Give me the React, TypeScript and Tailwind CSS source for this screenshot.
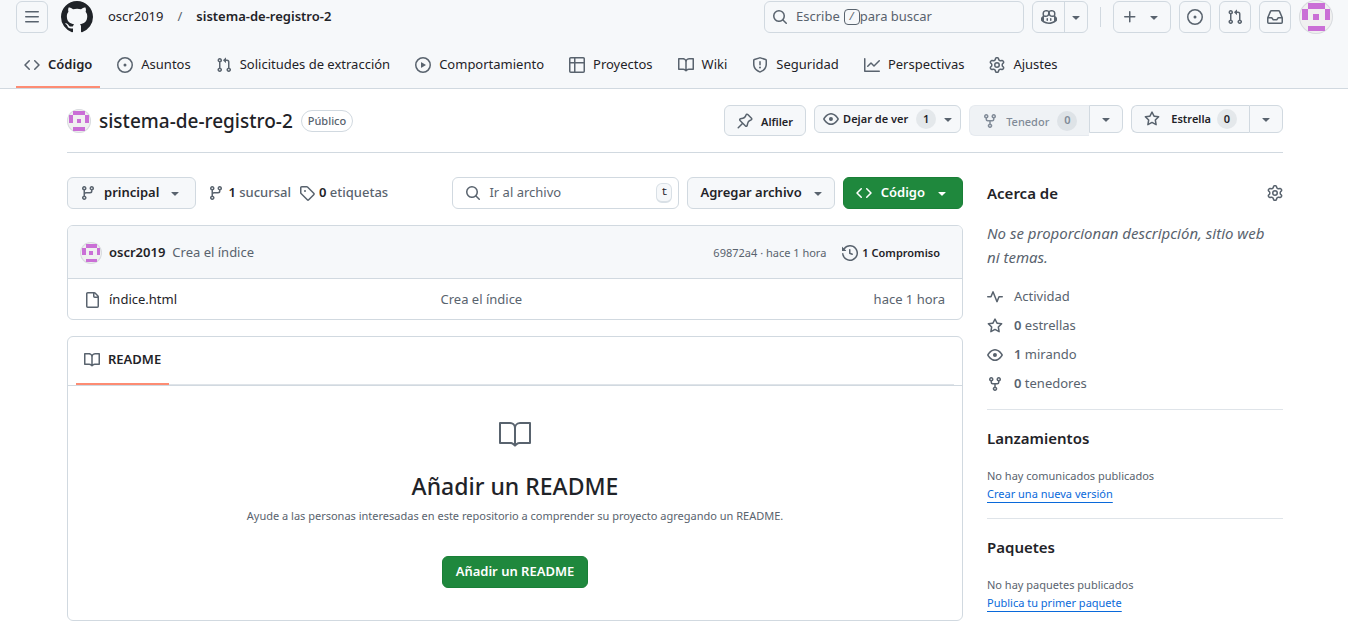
import React from 'react';

const icons = {
  bars: 'M1 2.75A.75.75 0 0 1 1.75 2h12.5a.75.75 0 0 1 0 1.5H1.75A.75.75 0 0 1 1 2.75Zm0 5A.75.75 0 0 1 1.75 7h12.5a.75.75 0 0 1 0 1.5H1.75A.75.75 0 0 1 1 7.75ZM1.75 12h12.5a.75.75 0 0 1 0 1.5H1.75a.75.75 0 0 1 0-1.5Z',
  github: 'M8 0c4.42 0 8 3.58 8 8a8.013 8.013 0 0 1-5.45 7.59c-.4.08-.55-.17-.55-.38 0-.27.01-1.13.01-2.2 0-.75-.25-1.23-.54-1.48 1.78-.2 3.65-.88 3.65-3.95 0-.88-.31-1.59-.82-2.15.08-.2.36-1.02-.08-2.12 0 0-.67-.22-2.2.82-.64-.18-1.32-.27-2-.27-.68 0-1.36.09-2 .27-1.53-1.03-2.2-.82-2.2-.82-.44 1.1-.16 1.92-.08 2.12-.51.56-.82 1.28-.82 2.15 0 3.06 1.86 3.75 3.64 3.95-.23.2-.44.55-.51 1.07-.46.21-1.61.55-2.33-.66-.15-.24-.6-.83-1.23-.82-.67.01-.27.38.01.53.34.19.73.9.82 1.13.16.45.68 1.31 2.69.94 0 .67.01 1.3.01 1.49 0 .21-.15.45-.55.38A7.995 7.995 0 0 1 0 8c0-4.42 3.58-8 8-8Z',
  code: 'm11.28 3.22 4.25 4.25a.75.75 0 0 1 0 1.06l-4.25 4.25a.749.749 0 0 1-1.275-.326.749.749 0 0 1 .215-.734L13.94 8l-3.72-3.72a.749.749 0 0 1 .326-1.275.749.749 0 0 1 .734.215Zm-6.56 0a.751.751 0 0 1 1.042.018.751.751 0 0 1 .018 1.042L2.06 8l3.72 3.72a.749.749 0 0 1-.326 1.275.749.749 0 0 1-.734-.215L.47 8.53a.75.75 0 0 1 0-1.06Z',
  issue: 'M8 9.5a1.5 1.5 0 1 0 0-3 1.5 1.5 0 0 0 0 3ZM8 0a8 8 0 1 1 0 16A8 8 0 0 1 8 0ZM1.5 8a6.5 6.5 0 1 0 13 0 6.5 6.5 0 0 0-13 0Z',
  pull: 'M1.5 3.25a2.25 2.25 0 1 1 3 2.122v5.256a2.251 2.251 0 1 1-1.5 0V5.372A2.25 2.25 0 0 1 1.5 3.25Zm5.677-.177L9.573.677A.25.25 0 0 1 10 .854V2.5h1A2.5 2.5 0 0 1 13.5 5v5.628a2.251 2.251 0 1 1-1.5 0V5a1 1 0 0 0-1-1h-1v1.646a.25.25 0 0 1-.427.177L7.177 3.427a.25.25 0 0 1 0-.354ZM3.75 2.5a.75.75 0 1 0 0 1.5.75.75 0 0 0 0-1.5Zm0 9.5a.75.75 0 1 0 0 1.5.75.75 0 0 0 0-1.5Zm8.25.75a.75.75 0 1 0 1.5 0 .75.75 0 0 0-1.5 0Z',
  play: 'M8 0a8 8 0 1 1 0 16A8 8 0 0 1 8 0ZM1.5 8a6.5 6.5 0 1 0 13 0 6.5 6.5 0 0 0-13 0Zm4.879-2.773 4.264 2.559a.25.25 0 0 1 0 .428l-4.264 2.559A.25.25 0 0 1 6 10.559V5.442a.25.25 0 0 1 .379-.215Z',
  table: 'M0 1.75C0 .784.784 0 1.75 0h12.5C15.216 0 16 .784 16 1.75v12.5A1.75 1.75 0 0 1 14.25 16H1.75A1.75 1.75 0 0 1 0 14.25ZM6.5 6.5v8h7.75a.25.25 0 0 0 .25-.25V6.5Zm8-1.5V1.75a.25.25 0 0 0-.25-.25H6.5V5Zm-13 1.5v7.75c0 .138.112.25.25.25H5v-8ZM5 5V1.5H1.75a.25.25 0 0 0-.25.25V5Z',
  book: 'M0 1.75A.75.75 0 0 1 .75 1h4.253c1.227 0 2.317.59 3 1.501A3.743 3.743 0 0 1 11.006 1h4.245a.75.75 0 0 1 .75.75v10.5a.75.75 0 0 1-.75.75h-4.507a2.25 2.25 0 0 0-1.591.659l-.622.621a.75.75 0 0 1-1.06 0l-.622-.621A2.25 2.25 0 0 0 5.258 13H.75a.75.75 0 0 1-.75-.75Zm7.251 10.324.004-5.073-.002-2.253A2.25 2.25 0 0 0 5.003 2.5H1.5v9h3.757a3.75 3.75 0 0 1 1.994.574ZM8.755 4.75l-.004 7.322a3.752 3.752 0 0 1 1.992-.572H14.5v-9h-3.495a2.25 2.25 0 0 0-2.25 2.25Z',
  shield: 'M7.467.133a1.748 1.748 0 0 1 1.066 0l5.25 1.68A1.75 1.75 0 0 1 15 3.48V7c0 1.566-.32 3.182-1.303 4.682-.983 1.498-2.585 2.813-5.032 3.855a1.697 1.697 0 0 1-1.33 0c-2.447-1.042-4.049-2.357-5.032-3.855C1.32 10.182 1 8.566 1 7V3.48a1.75 1.75 0 0 1 1.217-1.667Zm.61 1.429a.25.25 0 0 0-.153 0l-5.25 1.68a.25.25 0 0 0-.174.238V7c0 1.358.275 2.666 1.057 3.86.784 1.194 2.121 2.34 4.366 3.297a.196.196 0 0 0 .154 0c2.245-.956 3.582-2.104 4.366-3.298C13.225 9.666 13.5 8.36 13.5 7V3.48a.251.251 0 0 0-.174-.237l-5.25-1.68ZM8.75 4.75v3a.75.75 0 0 1-1.5 0v-3a.75.75 0 0 1 1.5 0ZM9 10.5a1 1 0 1 1-2 0 1 1 0 0 1 2 0Z',
  graph: 'M1.5 1.75V13.5h13.75a.75.75 0 0 1 0 1.5H.75a.75.75 0 0 1-.75-.75V1.75a.75.75 0 0 1 1.5 0Zm14.28 2.53-5.25 5.25a.75.75 0 0 1-1.06 0L7 7.06 4.28 9.78a.751.751 0 0 1-1.042-.018.751.751 0 0 1-.018-1.042l3.25-3.25a.75.75 0 0 1 1.06 0L10 7.94l4.72-4.72a.751.751 0 0 1 1.042.018.751.751 0 0 1 .018 1.042Z',
  gear: 'M8 0a8.2 8.2 0 0 1 .701.031C9.444.095 9.99.645 10.16 1.29l.288 1.107c.018.066.079.158.212.224.231.114.454.243.668.386.123.082.233.09.299.071l1.103-.303c.644-.176 1.392.021 1.82.63.27.385.506.792.704 1.218.315.675.111 1.422-.364 1.891l-.814.806c-.049.048-.098.147-.088.294.016.257.016.515 0 .772-.01.147.038.246.088.294l.814.806c.475.469.679 1.216.364 1.891a7.977 7.977 0 0 1-.704 1.217c-.428.61-1.176.807-1.82.63l-1.102-.302c-.067-.019-.177-.011-.3.071a5.909 5.909 0 0 1-.668.386c-.133.066-.194.158-.211.224l-.29 1.106c-.168.646-.715 1.196-1.458 1.26a8.006 8.006 0 0 1-1.402 0c-.743-.064-1.289-.614-1.458-1.26l-.289-1.106c-.018-.066-.079-.158-.212-.224a5.738 5.738 0 0 1-.668-.386c-.123-.082-.233-.09-.299-.071l-1.103.303c-.644.176-1.392-.021-1.82-.63a8.12 8.12 0 0 1-.704-1.218c-.315-.675-.111-1.422.363-1.891l.815-.806c.05-.048.098-.147.088-.294a6.214 6.214 0 0 1 0-.772c.01-.147-.038-.246-.088-.294l-.815-.806C.635 6.045.431 5.298.746 4.623a7.92 7.92 0 0 1 .704-1.217c.428-.61 1.176-.807 1.82-.63l1.102.302c.067.019.177.011.3-.071.214-.143.437-.272.668-.386.133-.066.194-.158.211-.224l.29-1.106C6.009.645 6.556.095 7.299.03 7.53.01 7.764 0 8 0Zm-.571 1.525c-.036.003-.108.036-.137.146l-.289 1.105c-.147.561-.549.967-.998 1.189-.173.086-.34.183-.5.29-.417.278-.97.423-1.529.27l-1.103-.303c-.109-.03-.175.016-.195.045-.22.312-.412.644-.573.99-.014.031-.021.11.059.19l.815.806c.411.406.562.957.53 1.456a4.709 4.709 0 0 0 0 .582c.032.499-.119 1.05-.53 1.456l-.815.806c-.081.08-.073.159-.059.19.162.346.353.677.573.989.02.03.085.076.195.046l1.102-.303c.56-.153 1.113-.008 1.53.27.161.107.328.204.501.29.447.222.85.629.997 1.189l.289 1.105c.029.109.101.143.137.146a6.6 6.6 0 0 0 1.142 0c.036-.003.108-.036.137-.146l.289-1.105c.147-.561.549-.967.998-1.189.173-.086.34-.183.5-.29.417-.278.97-.423 1.529-.27l1.103.303c.109.029.175-.016.195-.045.22-.313.411-.644.573-.99.014-.031.021-.11-.059-.19l-.815-.806c-.411-.406-.562-.957-.53-1.456a4.709 4.709 0 0 0 0-.582c-.032-.499.119-1.05.53-1.456l.815-.806c.081-.08.073-.159.059-.19a6.464 6.464 0 0 0-.573-.989c-.02-.03-.085-.076-.195-.046l-1.102.303c-.56.153-1.113.008-1.53-.27a4.44 4.44 0 0 0-.501-.29c-.447-.222-.85-.629-.997-1.189l-.289-1.105c-.029-.11-.101-.143-.137-.146a6.6 6.6 0 0 0-1.142 0ZM11 8a3 3 0 1 1-6 0 3 3 0 0 1 6 0ZM9.5 8a1.5 1.5 0 1 0-3.001.001A1.5 1.5 0 0 0 9.5 8Z',
  search: 'M10.68 11.74a6 6 0 0 1-7.922-8.982 6 6 0 0 1 8.982 7.922l3.04 3.04a.749.749 0 0 1-.326 1.275.749.749 0 0 1-.734-.215ZM11.5 7a4.499 4.499 0 1 0-8.997 0A4.499 4.499 0 0 0 11.5 7Z',
  caret: 'm4.427 7.427 3.396 3.396a.25.25 0 0 0 .354 0l3.396-3.396A.25.25 0 0 0 11.396 7H4.604a.25.25 0 0 0-.177.427Z',
  copilot: 'M7.998 15.035c-4.562 0-7.873-2.914-7.998-3.749V9.338c.085-.628.677-1.686 1.588-2.065.013-.07.024-.143.036-.218.029-.183.06-.384.126-.612-.201-.508-.254-1.084-.254-1.656 0-.87.128-1.769.693-2.484.579-.733 1.494-1.124 2.724-1.261 1.206-.134 2.262.034 2.944.765.05.053.096.108.139.165.044-.057.094-.112.143-.165.682-.731 1.738-.899 2.944-.765 1.23.137 2.145.528 2.724 1.261.566.715.693 1.614.693 2.484 0 .572-.053 1.148-.254 1.656.066.228.098.429.126.612.012.076.024.148.037.218.924.385 1.522 1.471 1.591 2.095v1.872c0 .766-3.351 3.795-8.002 3.795Zm0-1.485c2.28 0 4.584-1.11 5.002-1.433V7.862l-.023-.116c-.49.21-1.075.291-1.727.291-1.146 0-2.059-.327-2.71-.991A3.222 3.222 0 0 1 8 6.303a3.24 3.24 0 0 1-.544.743c-.65.664-1.563.991-2.71.991-.652 0-1.236-.081-1.727-.291l-.023.116v4.255c.419.323 2.722 1.433 5.002 1.433ZM6.762 2.83c-.193-.206-.637-.413-1.682-.297-1.019.113-1.479.404-1.713.7-.247.312-.369.789-.369 1.554 0 .793.129 1.171.308 1.371.162.181.519.379 1.442.379.853 0 1.339-.235 1.638-.54.315-.322.527-.827.617-1.553.117-.935-.037-1.395-.241-1.614Zm4.155-.297c-1.044-.116-1.488.091-1.681.297-.204.219-.359.679-.242 1.614.091.726.303 1.231.618 1.553.299.305.784.54 1.638.54.922 0 1.28-.198 1.442-.379.179-.2.308-.578.308-1.371 0-.765-.123-1.242-.37-1.554-.233-.296-.693-.587-1.713-.7ZM6.25 9.037a.75.75 0 0 1 .75.75v1.501a.75.75 0 0 1-1.5 0V9.787a.75.75 0 0 1 .75-.75Zm4.25.75v1.501a.75.75 0 0 1-1.5 0V9.787a.75.75 0 0 1 1.5 0Z',
  plus: 'M7.75 2a.75.75 0 0 1 .75.75V7h4.25a.75.75 0 0 1 0 1.5H8.5v4.25a.75.75 0 0 1-1.5 0V8.5H2.75a.75.75 0 0 1 0-1.5H7V2.75A.75.75 0 0 1 7.75 2Z',
  inbox: 'M2.8 2.06A1.75 1.75 0 0 1 4.41 1h7.18c.7 0 1.333.417 1.61 1.06l2.74 6.395c.04.093.06.194.06.295v4.5A1.75 1.75 0 0 1 14.25 15H1.75A1.75 1.75 0 0 1 0 13.25v-4.5c0-.101.02-.202.06-.295Zm1.61.44a.25.25 0 0 0-.23.152L1.887 8H4.75a.75.75 0 0 1 .6.3L6.625 10h2.75l1.275-1.7a.75.75 0 0 1 .6-.3h2.863L11.82 2.652a.25.25 0 0 0-.23-.152Zm10.09 7h-2.875l-1.275 1.7a.75.75 0 0 1-.6.3h-3.5a.75.75 0 0 1-.6-.3L4.375 9.5H1.5v3.75c0 .138.112.25.25.25h12.5a.25.25 0 0 0 .25-.25Z',
  pin: 'm11.294.984 3.722 3.722a1.75 1.75 0 0 1-.504 2.826l-1.327.613a3.089 3.089 0 0 0-1.707 2.084l-.584 2.454c-.317 1.332-1.972 1.8-2.94.832L5.75 11.311 1.78 15.28a.749.749 0 1 1-1.06-1.06l3.969-3.97-2.204-2.204c-.968-.968-.5-2.623.832-2.94l2.454-.584a3.08 3.08 0 0 0 2.084-1.707l.613-1.327a1.75 1.75 0 0 1 2.826-.504ZM6.283 9.723l2.732 2.731a.25.25 0 0 0 .42-.119l.584-2.454a4.586 4.586 0 0 1 2.537-3.098l1.328-.613a.25.25 0 0 0 .072-.404l-3.722-3.722a.25.25 0 0 0-.404.072l-.613 1.328a4.584 4.584 0 0 1-3.098 2.537l-2.454.584a.25.25 0 0 0-.119.42l2.731 2.732Z',
  eye: 'M8 2c1.981 0 3.671.992 4.933 2.078 1.27 1.091 2.187 2.345 2.637 3.023a1.62 1.62 0 0 1 0 1.798c-.45.678-1.367 1.932-2.637 3.023C11.67 13.008 9.981 14 8 14c-1.981 0-3.671-.992-4.933-2.078C1.797 10.83.88 9.576.43 8.898a1.62 1.62 0 0 1 0-1.798c.45-.677 1.367-1.931 2.637-3.022C4.33 2.992 6.019 2 8 2ZM1.679 7.932a.12.12 0 0 0 0 .136c.411.622 1.241 1.75 2.366 2.717C5.176 11.758 6.527 12.5 8 12.5c1.473 0 2.825-.742 3.955-1.715 1.124-.967 1.954-2.096 2.366-2.717a.12.12 0 0 0 0-.136c-.412-.621-1.242-1.75-2.366-2.717C10.824 4.242 9.473 3.5 8 3.5c-1.473 0-2.825.742-3.955 1.715-1.124.967-1.954 2.096-2.366 2.717ZM8 10a2 2 0 1 1-.001-3.999A2 2 0 0 1 8 10Z',
  fork: 'M5 5.372v.878c0 .414.336.75.75.75h4.5a.75.75 0 0 0 .75-.75v-.878a2.25 2.25 0 1 1 1.5 0v.878a2.25 2.25 0 0 1-2.25 2.25h-1.5v2.128a2.251 2.251 0 1 1-1.5 0V8.5h-1.5A2.25 2.25 0 0 1 3.5 6.25v-.878a2.25 2.25 0 1 1 1.5 0ZM5 3.25a.75.75 0 1 0-1.5 0 .75.75 0 0 0 1.5 0Zm6.75.75a.75.75 0 1 0 0-1.5.75.75 0 0 0 0 1.5Zm-3 8.75a.75.75 0 1 0-1.5 0 .75.75 0 0 0 1.5 0Z',
  star: 'M8 .25a.75.75 0 0 1 .673.418l1.882 3.815 4.21.612a.75.75 0 0 1 .416 1.279l-3.046 2.97.719 4.192a.751.751 0 0 1-1.088.791L8 12.347l-3.766 1.98a.75.75 0 0 1-1.088-.79l.72-4.194L.818 6.374a.75.75 0 0 1 .416-1.28l4.21-.611L7.327.668A.75.75 0 0 1 8 .25Zm0 2.445L6.615 5.5a.75.75 0 0 1-.564.41l-3.097.45 2.24 2.184a.75.75 0 0 1 .216.664l-.528 3.084 2.769-1.456a.75.75 0 0 1 .698 0l2.77 1.456-.53-3.084a.75.75 0 0 1 .216-.664l2.24-2.183-3.096-.45a.75.75 0 0 1-.564-.41L8 2.694Z',
  branch: 'M9.5 3.25a2.25 2.25 0 1 1 3 2.122V6A2.5 2.5 0 0 1 10 8.5H6a1 1 0 0 0-1 1v1.128a2.251 2.251 0 1 1-1.5 0V5.372a2.25 2.25 0 1 1 1.5 0v1.836A2.493 2.493 0 0 1 6 7h4a1 1 0 0 0 1-1v-.628A2.25 2.25 0 0 1 9.5 3.25Zm-6 0a.75.75 0 1 0 1.5 0 .75.75 0 0 0-1.5 0Zm8.25-.75a.75.75 0 1 0 0 1.5.75.75 0 0 0 0-1.5ZM4.25 12a.75.75 0 1 0 0 1.5.75.75 0 0 0 0-1.5Z',
  tag: 'M1 7.775V2.75C1 1.784 1.784 1 2.75 1h5.025c.464 0 .91.184 1.238.513l6.25 6.25a1.75 1.75 0 0 1 0 2.474l-5.026 5.026a1.75 1.75 0 0 1-2.474 0l-6.25-6.25A1.752 1.752 0 0 1 1 7.775Zm1.5 0c0 .066.026.13.073.177l6.25 6.25a.25.25 0 0 0 .354 0l5.025-5.025a.25.25 0 0 0 0-.354l-6.25-6.25a.25.25 0 0 0-.177-.073H2.75a.25.25 0 0 0-.25.25ZM6 5a1 1 0 1 1 0 2 1 1 0 0 1 0-2Z',
  history: 'm.427 1.927 1.215 1.215a8.002 8.002 0 1 1-1.6 5.685.75.75 0 1 1 1.493-.154 6.5 6.5 0 1 0 1.18-4.458l1.358 1.358A.25.25 0 0 1 3.896 6H.25A.25.25 0 0 1 0 5.75V2.104a.25.25 0 0 1 .427-.177ZM7.75 4a.75.75 0 0 1 .75.75v2.992l2.028.812a.75.75 0 0 1-.557 1.392l-2.5-1A.751.751 0 0 1 7 8.25v-3.5A.75.75 0 0 1 7.75 4Z',
  file: 'M2 1.75C2 .784 2.784 0 3.75 0h6.586c.464 0 .909.184 1.237.513l2.914 2.914c.329.328.513.773.513 1.237v9.586A1.75 1.75 0 0 1 13.25 16h-9.5A1.75 1.75 0 0 1 2 14.25Zm1.75-.25a.25.25 0 0 0-.25.25v12.5c0 .138.112.25.25.25h9.5a.25.25 0 0 0 .25-.25V6h-2.75A1.75 1.75 0 0 1 9 4.25V1.5Zm6.75.062V4.25c0 .138.112.25.25.25h2.688l-.011-.013-2.914-2.914-.013-.011Z',
  pulse: 'M6 2c.306 0 .582.187.696.471L10 10.731l1.304-3.26A.751.751 0 0 1 12 7h3.25a.75.75 0 0 1 0 1.5h-2.742l-1.812 4.528a.751.751 0 0 1-1.392 0L6 4.77 4.696 8.03A.75.75 0 0 1 4 8.5H.75a.75.75 0 0 1 0-1.5h2.742l1.812-4.529A.751.751 0 0 1 6 2Z',
};

type IconName = keyof typeof icons;

function Icon({ name, className = 'w-4 h-4 text-[#59636e]' }: { name: IconName; className?: string }) {
  return (
    <svg viewBox="0 0 16 16" fill="currentColor" aria-hidden="true" className={`shrink-0 ${className}`}>
      <path d={icons[name]} />
    </svg>
  );
}

function Avatar({ className }: { className: string }) {
  return (
    <svg viewBox="0 0 60 60" aria-hidden="true" shapeRendering="crispEdges" className={`shrink-0 rounded-full bg-[#f0f0f0] ring-1 ring-inset ring-[#d8dbdf] ${className}`}>
      <path fill="#ca6fd6" d="M15 5h30v10H15ZM5 15h10v20H5ZM45 15h10v20H45ZM25 25h10v10H25ZM15 45h30v10H15Z" />
    </svg>
  );
}

const navItems: { icon: IconName; label: string }[] = [
  { icon: 'code', label: 'Código' },
  { icon: 'issue', label: 'Asuntos' },
  { icon: 'pull', label: 'Solicitudes de extracción' },
  { icon: 'play', label: 'Comportamiento' },
  { icon: 'table', label: 'Proyectos' },
  { icon: 'book', label: 'Wiki' },
  { icon: 'shield', label: 'Seguridad' },
  { icon: 'graph', label: 'Perspectivas' },
  { icon: 'gear', label: 'Ajustes' },
];

const stats: { icon: IconName; count?: string; label: string }[] = [
  { icon: 'pulse', label: 'Actividad' },
  { icon: 'star', count: '0', label: 'estrellas' },
  { icon: 'eye', count: '1', label: 'mirando' },
  { icon: 'fork', count: '0', label: 'tenedores' },
];

const iconButton = 'flex w-8 h-8 items-center justify-center rounded-md border border-[#d1d9e0]';

function Header() {
  return (
    <header className="bg-[#f6f8fa] border-b border-[#d1d9e0]">
      <div className="flex items-center pl-4 pr-[15px]">
        <button aria-label="Menú" className={iconButton}>
          <Icon name="bars" />
        </button>
        <a href="#" aria-label="Inicio" className="ml-[13px]">
          <Icon name="github" className="w-8 h-8 text-[#1f2328]" />
        </a>
        <nav className="flex items-center gap-[14px] ml-[15px] text-[13px]">
          <a href="#">oscr2019</a>
          <span className="text-[#59636e]">/</span>
          <a href="#" className="font-semibold">sistema-de-registro-2</a>
        </nav>

        <div className="flex items-center gap-2 ml-auto">
          <button className="flex w-[260px] h-8 items-center rounded-md border border-[#d1d9e0] px-[7px] text-[13px] text-[#59636e]">
            <Icon name="search" />
            <span className="ml-2">Escribe</span>
            <kbd className="flex w-4 h-4 ml-1 items-center justify-center rounded-sm border border-[#59636e] font-mono text-[11px]">/</kbd>
            <span>para buscar</span>
          </button>
          <div className="flex h-8 rounded-md border border-[#d1d9e0]">
            <button aria-label="Copilot" className="flex w-8 items-center justify-center border-r border-[#d1d9e0]">
              <Icon name="copilot" />
            </button>
            <button aria-label="Opciones de Copilot" className="flex w-[22px] items-center justify-center">
              <Icon name="caret" />
            </button>
          </div>
          <div className="w-px h-5 mx-1 bg-[#d1d9e0]" />
          <button aria-label="Crear nuevo" className="flex h-8 items-center gap-2 rounded-md border border-[#d1d9e0] px-2">
            <Icon name="plus" />
            <Icon name="caret" />
          </button>
          <button aria-label="Asuntos" className={iconButton}>
            <Icon name="issue" />
          </button>
          <button aria-label="Solicitudes de extracción" className={iconButton}>
            <Icon name="pull" />
          </button>
          <button aria-label="Notificaciones" className={iconButton}>
            <Icon name="inbox" />
          </button>
          <button aria-label="Cuenta">
            <Avatar className="w-[34px] h-[34px]" />
          </button>
        </div>
      </div>

      <nav className="flex gap-[9px] px-4 pt-[10px] text-[13px]">
        {navItems.map((item, i) => (
          <a
            key={item.label}
            href="#"
            className={`flex h-11 items-center gap-2 px-2 border-b-2 ${i === 0 ? 'border-[#fd8c73] font-semibold' : 'border-transparent'}`}
          >
            <Icon name={item.icon} />
            {item.label}
          </a>
        ))}
      </nav>
    </header>
  );
}

function Counter({ children }: { children: React.ReactNode }) {
  return (
    <span className="flex min-w-5 h-5 items-center justify-center rounded-full bg-[#818b98]/15 text-[11px]">{children}</span>
  );
}

function TitleBar() {
  const box = 'flex items-center border border-[#d1d9e0] bg-[#f6f8fa]';
  return (
    <div className="flex items-start justify-between pt-4 pb-4 border-b border-[#d1d9e0]">
      <div className="flex h-[31px] items-center">
        <Avatar className="w-6 h-6" />
        <h1 className="ml-2 text-[19px] font-medium leading-6">sistema-de-registro-2</h1>
        <span className="ml-2 rounded-full border border-[#d1d9e0] px-[6px] text-[11px] font-medium leading-5 text-[#59636e]">Público</span>
      </div>
      <div className="flex items-start gap-2 text-[11px] font-semibold">
        <button className={`${box} h-[31px] gap-2 rounded-md px-3`}>
          <Icon name="pin" />
          <span className="pt-1">Alfiler</span>
        </button>
        <button className={`${box} h-7 gap-1 rounded-md pl-2 pr-1`}>
          <Icon name="eye" />
          <span className="mr-1">Dejar de ver</span>
          <Counter>1</Counter>
          <Icon name="caret" />
        </button>
        <div className="flex items-start">
          <button disabled className="flex h-[31px] items-center gap-2 rounded-l-md border border-r-0 border-[#e6eaef] bg-[#eff2f5] px-3 text-[#818b98]">
            <Icon name="fork" className="w-4 h-4" />
            <span className="pt-1 font-medium">Tenedor</span>
            <Counter>0</Counter>
          </button>
          <button aria-label="Ver tenedores" className={`${box} w-[34px] h-7 justify-center rounded-r-md`}>
            <Icon name="caret" />
          </button>
        </div>
        <div className="flex items-start">
          <button className={`${box} h-7 rounded-l-md border-r-0 px-3`}>
            <Icon name="star" />
            <span className="ml-[11px] mr-[6px]">Estrella</span>
            <Counter>0</Counter>
          </button>
          <button aria-label="Listas" className={`${box} w-[34px] h-7 justify-center rounded-r-md`}>
            <Icon name="caret" />
          </button>
        </div>
      </div>
    </div>
  );
}

function Toolbar() {
  return (
    <div className="flex items-center gap-2 text-[13px]">
      <button className="flex h-8 items-center gap-2 rounded-md border border-[#d1d9e0] bg-[#f6f8fa] px-3 font-semibold">
        <Icon name="branch" />
        principal
        <Icon name="caret" />
      </button>
      <div className="flex items-center gap-2 ml-1 font-medium text-[#59636e]">
        <a href="#" className="flex items-center gap-1">
          <Icon name="branch" />
          <span><b className="font-semibold text-[#1f2328]">1</b> sucursal</span>
        </a>
        <a href="#" className="flex items-center gap-1">
          <Icon name="tag" />
          <span><b className="font-semibold text-[#1f2328]">0</b> etiquetas</span>
        </a>
      </div>
      <label className="flex w-[227px] h-8 items-center ml-auto rounded-md border border-[#d1d9e0] pl-3 pr-[6px]">
        <Icon name="search" />
        <input type="text" aria-label="Ir al archivo" placeholder="Ir al archivo" className="min-w-0 flex-1 ml-2 outline-none placeholder:text-[#59636e]" />
        <kbd className="flex w-4 h-5 items-center justify-center rounded-md border border-b-2 border-[#d9e0e6] bg-[#f6f8fa] font-['Liberation_Mono',monospace] text-[11px]">t</kbd>
      </label>
      <button className="flex h-8 items-center gap-2 rounded-md border border-[#d1d9e0] bg-[#f6f8fa] pl-3 pr-2 font-semibold">
        Agregar archivo
        <Icon name="caret" />
      </button>
      <button className="flex h-8 items-center gap-[9px] rounded-md border border-[#1a7f37] bg-[#1f883d] px-3 font-semibold text-white">
        <Icon name="code" className="w-4 h-4 text-white" />
        Código
        <Icon name="caret" className="w-4 h-4 text-white" />
      </button>
    </div>
  );
}

function Files() {
  return (
    <section className="mt-4 overflow-hidden rounded-md border border-[#d1d9e0] text-[13px]">
      <div className="flex h-[53px] items-center border-b border-[#d1d9e0] bg-[#f6f8fa] pt-0.5 pl-3 pr-[22px]">
        <Avatar className="w-[22px] h-[22px]" />
        <a href="#" className="ml-[7px] font-semibold">oscr2019</a>
        <a href="#" className="ml-[7px] text-[#59636e]">Crea el índice</a>
        <span className="ml-auto text-[11px] text-[#59636e]">69872a4 · hace 1 hora</span>
        <a href="#" className="flex items-center gap-1 ml-4 text-[11px] font-semibold">
          <Icon name="history" />
          1 Compromiso
        </a>
      </div>
      <table className="w-full table-fixed">
        <tbody>
          <tr className="h-10">
            <td className="w-5/12 pt-0.5 pl-4">
              <a href="#" className="flex items-center gap-[9px]">
                <Icon name="file" />
                índice.html
              </a>
            </td>
            <td className="pt-0.5 text-[#59636e]">
              <a href="#">Crea el índice</a>
            </td>
            <td className="w-36 pt-0.5 pr-[17px] text-right text-[#59636e]">hace 1 hora</td>
          </tr>
        </tbody>
      </table>
    </section>
  );
}

function Readme() {
  return (
    <section className="mt-4 rounded-md border border-[#d1d9e0]">
      <div className="border-b border-[#d1d9e0] px-2">
        <div className="flex border-b border-[#dfe4e9]">
          <a href="#" className="flex h-12 items-center gap-2 -mb-px border-b-2 border-[#fd8c73] px-2 text-[13px] font-semibold">
            <Icon name="book" />
            README
          </a>
        </div>
      </div>
      <div className="flex flex-col items-center px-8 pt-8 pb-8">
        <svg viewBox="0 0 24 24" fill="currentColor" aria-hidden="true" className="w-8 h-8 text-[#59636e]">
          <path d="M0 3.75A.75.75 0 0 1 .75 3h7.497c1.566 0 2.945.8 3.751 2.014A4.495 4.495 0 0 1 15.75 3h7.5a.75.75 0 0 1 .75.75v15.063a.752.752 0 0 1-.755.75l-7.682-.052a3 3 0 0 0-2.142.878l-.89.891a.75.75 0 0 1-1.061 0l-.902-.901a2.996 2.996 0 0 0-2.121-.879H.75a.75.75 0 0 1-.75-.75Zm12.75 15.232a4.503 4.503 0 0 1 2.823-.971l6.927.047V4.5h-6.75a3 3 0 0 0-3 3ZM11.247 7.497a3 3 0 0 0-3-2.997H1.5V18h6.947c1.018 0 2.006.346 2.803.98Z" />
        </svg>
        <h2 className="mt-4 text-[23px] font-medium leading-10">Añadir un README</h2>
        <p className="text-[11px] leading-5 text-[#59636e]">
          Ayude a las personas interesadas en este repositorio a comprender su proyecto agregando un README.
        </p>
        <button className="h-8 mt-[30px] rounded-md border border-[#1a7f37] bg-[#1f883d] px-[13px] text-[13px] font-semibold text-white">
          Añadir un README
        </button>
      </div>
    </section>
  );
}

function Sidebar() {
  return (
    <aside className="w-[296px] shrink-0">
      <section className="pb-[15px] border-b border-[#dfe4e9]">
        <div className="flex h-8 items-center justify-between">
          <h2 className="text-[15px] font-semibold">Acerca de</h2>
          <button aria-label="Editar detalles">
            <Icon name="gear" />
          </button>
        </div>
        <p className="mt-3 pr-2 text-[15px] italic leading-6 text-[#59636e]">
          No se proporcionan descripción, sitio web ni temas.
        </p>
        <ul className="flex flex-col gap-2 mt-[17px] text-[13px] leading-[21px] text-[#59636e]">
          {stats.map((s) => (
            <li key={s.label}>
              <a href="#" className="flex items-center gap-[11px]">
                <Icon name={s.icon} />
                <span>{s.count && <b className="font-semibold">{s.count} </b>}{s.label}</span>
              </a>
            </li>
          ))}
        </ul>
      </section>
      <section className="pt-4 pb-[15px] border-b border-[#dfe4e9]">
        <h2 className="text-[15px] font-semibold leading-6">Lanzamientos</h2>
        <p className="mt-[17px] text-[11px] leading-[18px] text-[#59636e]">No hay comunicados publicados</p>
        <a href="#" className="block text-[11px] leading-[18px] text-[#0969da] underline underline-offset-4">Crear una nueva versión</a>
      </section>
      <section className="pt-4">
        <h2 className="text-[15px] font-semibold leading-6">Paquetes</h2>
        <p className="mt-[17px] text-[11px] leading-[18px] text-[#59636e]">No hay paquetes publicados</p>
        <a href="#" className="block text-[11px] leading-[18px] text-[#0969da] underline underline-offset-4">Publica tu primer paquete</a>
      </section>
    </aside>
  );
}

export default function App() {
  return (
    <div className="bg-white font-['Noto_Sans','Open_Sans',sans-serif] text-[#1f2328]">
      <Header />
      <main className="max-w-[1280px] mx-auto pl-[33px] pr-[31px]">
        <TitleBar />
        <div className="flex gap-6 pt-6">
          <div className="min-w-0 flex-1">
            <Toolbar />
            <Files />
            <Readme />
          </div>
          <Sidebar />
        </div>
      </main>
    </div>
  );
}
